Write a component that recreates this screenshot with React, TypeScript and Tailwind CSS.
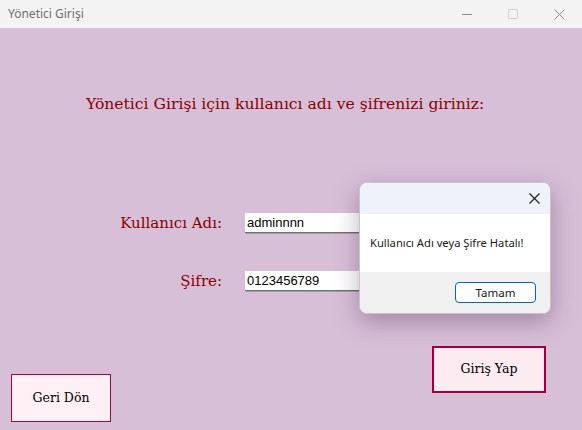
import React from 'react';

const serif = "font-['DejaVu_Serif',serif]";
const ui = "font-['Noto_Sans','Open_Sans',sans-serif]";

const TitleBar = () => (
  <div className={`h-[28px] bg-[#f3f3f3] flex items-center ${ui}`}>
    <span className="pl-[8px] text-[12px] text-[#707070] flex-1">Yönetici Girişi</span>
    <div className="flex items-center h-full">
      <div className="w-[46px] h-full flex items-center justify-center">
        <div className="w-[10px] h-px bg-[#8a8a8a]" />
      </div>
      <div className="w-[46px] h-full flex items-center justify-center">
        <div className="w-[10px] h-[10px] border border-[#cfcfcf] rounded-[1px]" />
      </div>
      <div className="w-[46px] h-full flex items-center justify-center">
        <svg width="11" height="11" viewBox="0 0 11 11" stroke="#8a8a8a" strokeWidth="1">
          <path d="M0.5 0.5 L10.5 10.5 M10.5 0.5 L0.5 10.5" />
        </svg>
      </div>
    </div>
  </div>
);

const Field = ({ label, value }: { label: string; value: string }) => (
  <div className="flex items-center">
    <label className={`w-[245px] pr-[23px] text-right text-[15px] text-[#8b0000] ${serif}`}>{label}</label>
    <div className="w-[150px] h-[20px] bg-white border-b border-[#707070] shadow-[1px_1px_0_#a0a0a0] flex items-center pl-[2px] text-[13px] text-black font-['Liberation_Sans',sans-serif]">
      {value}
    </div>
  </div>
);

const MessageBox = () => (
  <div className={`absolute left-[359px] top-[154px] w-[192px] h-[132px] rounded-[8px] overflow-hidden bg-white shadow-[0_8px_24px_rgba(60,30,60,0.35)] border border-[#c9c4cc] flex flex-col ${ui}`}>
    <div className="h-[31px] bg-[#eef2fa] flex items-center justify-end pr-[10px]">
      <svg width="11" height="11" viewBox="0 0 11 11" stroke="#202020" strokeWidth="1.2">
        <path d="M0.5 0.5 L10.5 10.5 M10.5 0.5 L0.5 10.5" />
      </svg>
    </div>
    <div className="h-[58px] bg-white flex items-center pl-[10px] text-[11.2px] text-[#1a1a1a]">
      Kullanıcı Adı veya Şifre Hatalı!
    </div>
    <div className="flex-1 bg-[#f0f0f0] flex items-center justify-end pr-[14px]">
      <button className="w-[81px] h-[21px] rounded-[4px] border border-[#0067c0] bg-[#fdfdfd] text-[11.5px] text-[#1a1a1a] leading-none">
        Tamam
      </button>
    </div>
  </div>
);

export default function App() {
  return (
    <div className="w-[582px] h-[430px] flex flex-col overflow-hidden">
      <TitleBar />
      <div className="flex-1 bg-[#d8bfd8] relative flex flex-col">
        <h1 className={`pt-[66px] pl-[86px] text-[15.6px] leading-[20px] text-[#8b0000] ${serif}`}>
          Yönetici Girişi için kullanıcı adı ve şifrenizi giriniz:
        </h1>
        <div className="mt-[98px] flex flex-col gap-[35px]">
          <Field label="Kullanıcı Adı:" value="adminnnn" />
          <Field label="Şifre:" value="0123456789" />
        </div>
        <div className="flex-1 flex items-end justify-between pl-[11px] pr-[36px] pb-[8px]">
          <button className={`w-[100px] h-[48px] bg-[#fff0f5] border border-[#b0003a] text-[12.5px] text-black ${serif}`}>
            Geri Dön
          </button>
          <button className={`w-[114px] h-[47px] mb-[29px] bg-[#fcecf2] border-2 border-[#a0003a] text-[12.5px] text-black ${serif}`}>
            Giriş Yap
          </button>
        </div>
        <MessageBox />
      </div>
    </div>
  );
}
